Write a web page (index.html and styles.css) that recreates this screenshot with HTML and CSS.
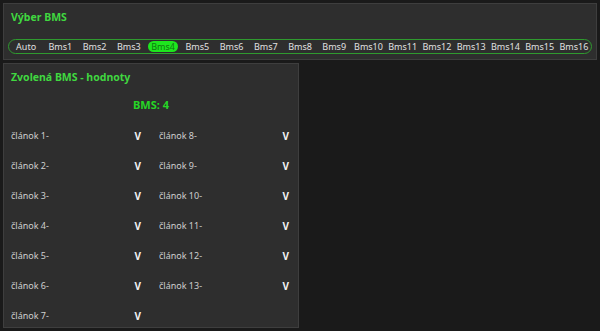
FILE: index.html
```html
<!DOCTYPE html>
<html lang="sk">
<head>
    <meta charset="UTF-8">
    <meta name="viewport" content="width=device-width, initial-scale=1.0">
    <title>BMS</title>
    <link rel="stylesheet" href="styles.css">
</head>
<body>
    <section class="card card-select">
        <h2 class="card-title">Výber BMS</h2>
        <div class="bms-bar">
            <label class="bms-item"><span>Auto</span></label>
            <label class="bms-item"><span>Bms1</span></label>
            <label class="bms-item"><span>Bms2</span></label>
            <label class="bms-item"><span>Bms3</span></label>
            <label class="bms-item active"><span>Bms4</span></label>
            <label class="bms-item"><span>Bms5</span></label>
            <label class="bms-item"><span>Bms6</span></label>
            <label class="bms-item"><span>Bms7</span></label>
            <label class="bms-item"><span>Bms8</span></label>
            <label class="bms-item"><span>Bms9</span></label>
            <label class="bms-item"><span>Bms10</span></label>
            <label class="bms-item"><span>Bms11</span></label>
            <label class="bms-item"><span>Bms12</span></label>
            <label class="bms-item"><span>Bms13</span></label>
            <label class="bms-item"><span>Bms14</span></label>
            <label class="bms-item"><span>Bms15</span></label>
            <label class="bms-item"><span>Bms16</span></label>
        </div>
    </section>

    <section class="card card-values">
        <h2 class="card-title">Zvolená BMS - hodnoty</h2>
        <div class="bms-current">BMS: 4</div>
        <div class="cells">
            <div class="cell"><span>článok 1-</span><b>V</b></div>
            <div class="cell"><span>článok 2-</span><b>V</b></div>
            <div class="cell"><span>článok 3-</span><b>V</b></div>
            <div class="cell"><span>článok 4-</span><b>V</b></div>
            <div class="cell"><span>článok 5-</span><b>V</b></div>
            <div class="cell"><span>článok 6-</span><b>V</b></div>
            <div class="cell"><span>článok 7-</span><b>V</b></div>
            <div class="cell"><span>článok 8-</span><b>V</b></div>
            <div class="cell"><span>článok 9-</span><b>V</b></div>
            <div class="cell"><span>článok 10-</span><b>V</b></div>
            <div class="cell"><span>článok 11-</span><b>V</b></div>
            <div class="cell"><span>článok 12-</span><b>V</b></div>
            <div class="cell"><span>článok 13-</span><b>V</b></div>
        </div>
    </section>
</body>
</html>
```

FILE: styles.css
```css
*{
    margin: 0;
    padding: 0;
    box-sizing: border-box;
}
body{
    font-family: "Noto Sans", "Open Sans", sans-serif;
    background-color: #1a1a1a;
    color: #d8d8d8;
    padding: 3px;
    display: flex;
    flex-direction: column;
    align-items: flex-start;
    gap: 3px;
}

.card{
    background-color: #2e2e2e;
    border: 1px solid #3e3e3e;
    padding: 6px 4px 5px;
}
.card-select{
    width: 594px;
    height: 57px;
}
.card-values{
    width: 296px;
    height: 265px;
}

.card-title{
    font-size: 10.5px;
    line-height: 14px;
    font-weight: bold;
    color: #40d840;
    padding-left: 3px;
}

.bms-bar{
    margin-top: 15px;
    height: 15px;
    display: grid;
    grid-template-columns: repeat(17, minmax(0, 1fr));
    align-items: center;
    border: 1px solid #2f9a2f;
    border-radius: 8px;
}
.bms-item{
    display: flex;
    justify-content: center;
    font-size: 9px;
    line-height: 11px;
    color: #e0e0e0;
    white-space: nowrap;
}
.bms-item span{
    padding: 0 3px;
    border-radius: 6px;
}
.bms-item.active span{
    background-color: #1ee61e;
    color: #0f7a0f;
}

.bms-current{
    margin-top: 14px;
    text-align: center;
    font-size: 11px;
    line-height: 14px;
    font-weight: bold;
    color: #26d626;
}

.cells{
    margin-top: 17px;
    padding: 0 5px 0 3px;
    display: grid;
    grid-template-columns: 1fr 1fr;
    grid-template-rows: repeat(7, 14px);
    grid-auto-flow: column;
    column-gap: 18px;
    row-gap: 16px;
}
.cell{
    display: flex;
    justify-content: space-between;
    font-size: 9px;
    line-height: 14px;
    color: #cfcfcf;
}
.cell b{
    color: #f2f2f2;
    font-size: 10px;
}
```
